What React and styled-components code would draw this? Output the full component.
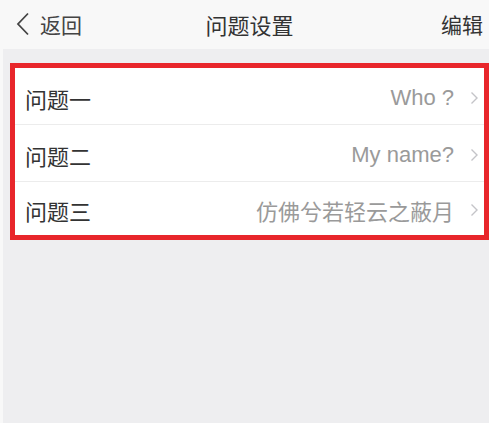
import styled, { createGlobalStyle } from "styled-components";

const GlobalStyle = createGlobalStyle`
  html, body {
    margin: 0;
    padding: 0;
    background: #f8f8f8;
  }
  body {
    font-family: "Liberation Sans", "Noto Sans CJK SC", sans-serif;
  }
`;

const questions = [
  { label: "问题一", value: "Who ?" },
  { label: "问题二", value: "My name?" },
  { label: "问题三", value: "仿佛兮若轻云之蔽月" },
];

const App = () => {
  return (
    <>
      <GlobalStyle />
      <Screen>
        <NavBar>
          <BackButton>
            <svg width="14" height="24" viewBox="0 0 14 24">
              <path d="M12 1.5 L2 12 L12 22.5" fill="none" stroke="#444" strokeWidth="1.8" />
            </svg>
            <span>返回</span>
          </BackButton>
          <Title>问题设置</Title>
          <NavAction>编辑</NavAction>
        </NavBar>
        <Body>
          <Highlight>
            {questions.map((q) => (
              <Row key={q.label}>
                <Label>{q.label}</Label>
                <Value>{q.value}</Value>
                <svg width="9" height="14" viewBox="0 0 9 14">
                  <path d="M1.5 1.5 L7 7 L1.5 12.5" fill="none" stroke="#c4c4c8" strokeWidth="1.4" />
                </svg>
              </Row>
            ))}
          </Highlight>
        </Body>
      </Screen>
    </>
  );
};

const Screen = styled.div`
  width: 489px;
  height: 423px;
  display: flex;
  flex-direction: column;
  overflow: hidden;
`;

const NavBar = styled.div`
  height: 49px;
  flex-shrink: 0;
  display: grid;
  grid-template-columns: 1fr auto 1fr;
  align-items: center;
  background: #f8f8f8;
  font-size: 21px;
  color: #333;
  padding: 0 6px 0 16px;
`;

const BackButton = styled.div`
  display: flex;
  align-items: center;
  gap: 10px;
  color: #444;
  padding-bottom: 2px;
`;

const Title = styled.div`
  font-size: 22px;
  color: #333;
  padding-bottom: 2px;
`;

const NavAction = styled.div`
  justify-self: end;
  color: #333;
  padding-bottom: 2px;
`;

const Body = styled.div`
  flex: 1;
  margin-left: 3px;
  background: #eeeef0;
  padding: 14px 0 0 7px;
`;

const Highlight = styled.div`
  border: 5px solid #e8262b;
  border-right-width: 5px;
  background: #fff;
`;

const Row = styled.div`
  height: 57px;
  display: flex;
  align-items: center;
  padding: 3px 5px 0 10px;
  box-sizing: border-box;
  border-bottom: 1px solid #ececec;
  font-size: 22px;

  &:last-child {
    height: 53px;
    border-bottom: none;
  }

  svg {
    margin-left: 16px;
    flex-shrink: 0;
  }
`;

const Label = styled.span`
  flex: 1;
  color: #333;
`;

const Value = styled.span`
  color: #9a9a9a;
`;

export default App;
